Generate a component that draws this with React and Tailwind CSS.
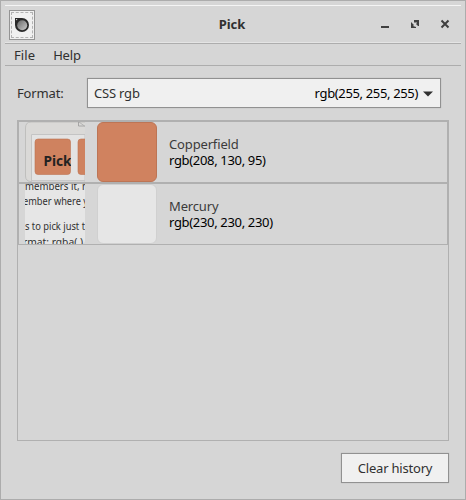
import React from "react";

function TitleBar() {
  return (
    <div className="grid h-[39px] shrink-0 grid-cols-[1fr_auto_1fr] items-center border-b border-[#adadad] border-t border-t-[#f4f4f4] shadow-[inset_0_-1px_0_#e4e4e4]">
      <div className="ml-1 flex h-[30px] w-[26px] items-center justify-center border border-[#949494] bg-[#f0f0f0]">
        <div className="flex h-[26px] w-[22px] items-center justify-center border border-dashed border-[#b2b2b2]">
          <svg width="14" height="14" viewBox="0 0 14 14" className="shrink-0">
            <defs>
              <linearGradient id="lens" x1="0" y1="0" x2="1" y2="1">
                <stop offset="0" stopColor="#666" />
                <stop offset="1" stopColor="#ccc" />
              </linearGradient>
            </defs>
            <path d="M0 0h7a7 7 0 1 1-7 7z" fill="#292929" />
            <circle cx="7.2" cy="7.2" r="5" fill="url(#lens)" />
            <circle cx="1.6" cy="1.6" r=".7" fill="#ddd" />
          </svg>
        </div>
      </div>
      <span className="mb-[2px] mr-[2px] text-[13px] font-bold leading-4 tracking-[-0.1px]">Pick</span>
      <div className="flex items-center justify-end gap-5 pb-px pr-[11px] text-[#404040]">
        <svg width="10" height="10" viewBox="0 0 10 10"><path d="M1 7h8v2H1z" fill="currentColor" /></svg>
        <svg width="10" height="10" viewBox="0 0 10 10">
          <path d="M4 1h5v6H8L6 5 7 4 6 3 5 4 4 3zM1 3l3 3-1 1 3 1v1H1z" fill="currentColor" />
        </svg>
        <svg width="10" height="10" viewBox="0 0 10 10"><path d="m1.500 1.500 7 7m0-7-7 7" stroke="currentColor" strokeWidth="2" /></svg>
      </div>
    </div>
  );
}

function CopperPreview() {
  return (
    <svg width="60" height="60" viewBox="0 0 60 60" className="shrink-0">
      <path d="M60 0H6Q.5 0 .5 6v48q0 5.500 6 5.500h54" fill="#dad9d7" stroke="#bfbfbd" />
      <path d="M6.500 60V12.500H60V60z" fill="#e3e3e3" stroke="#c4c4c4" />
      <path d="M53.500 0v4H60" fill="none" stroke="#999" strokeWidth=".8" />
      <path d="m54 0 5.500 4" fill="none" stroke="#aaa" strokeWidth=".8" />
      <rect x="10" y="17" width="35.500" height="35.500" rx="3" fill="#cf825f" stroke="#bd7453" strokeWidth=".6" />
      <rect x="53" y="17" width="20" height="35.500" rx="3" fill="#cf825f" stroke="#bd7453" strokeWidth=".6" />
      <svg width="46" height="60">
        <text x="18.500" y="44" fill="#222" fontSize="14" fontWeight="700" textLength="28" lengthAdjust="spacingAndGlyphs">Pick</text>
      </svg>
      <path d="M7 58.500h53" stroke="#c8c8c8" />
    </svg>
  );
}

function TextPreview() {
  return (
    <svg width="60" height="60" viewBox="0 0 60 60" className="shrink-0 overflow-hidden">
      <rect width="60" height="60" rx="4" fill="#e6e6e6" />
      <g fill="#303030" fontSize="10">
        <text x="0" y="6" textLength="63" lengthAdjust="spacingAndGlyphs">members it, n</text>
        <text x="-2" y="21" textLength="65" lengthAdjust="spacingAndGlyphs">ember where y</text>
        <text x="0" y="46" textLength="60" lengthAdjust="spacingAndGlyphs">s to pick just t</text>
        <text x="-2" y="61.500" textLength="60" lengthAdjust="spacingAndGlyphs">rmat: rgba( )</text>
      </g>
    </svg>
  );
}

function HistoryRow({ preview, swatch, name, value, last }) {
  return (
    <div className={`flex shrink-0 border-[#b0b0b0] pl-[6px] ${last ? "h-[61px] border-b" : "h-[62px] border-b-2"}`}>
      {preview}
      <div className={`ml-3 h-[60px] w-[60px] shrink-0 rounded-[6px] border ${swatch}`} />
      <div className="ml-3 pt-[14px] leading-4">
        <div className="tracking-[-0.15px] text-[#3b3b3b]">{name}</div>
        <div className="tracking-[-0.33px] text-black">{value}</div>
      </div>
    </div>
  );
}

export default function App() {
  return (
    <div className="flex h-[500px] w-[466px] flex-col overflow-hidden border border-[#acacac] bg-[#d6d6d6] px-1 pt-1 font-['Noto_Sans','Open_Sans',sans-serif] text-[13px] text-[#303030]">
      <TitleBar />
      <nav className="flex h-[22px] shrink-0 items-center gap-[18px] border-b border-[#adadad] pl-[9px] leading-4">
        <span className="tracking-[0.1px]">File</span>
        <span className="tracking-[-0.2px]">Help</span>
      </nav>
      <main className="flex flex-1 flex-col px-3 pt-3">
        <div className="flex h-[30px] shrink-0 items-center">
          <label className="w-[70px] pt-px tracking-[-0.15px]">Format:</label>
          <button className="flex h-[30px] w-[354px] items-center border border-[#919191] bg-[#f0f0f0] pl-[6px] pr-[7px] pt-px shadow-[0_0_1px_#aaa]">
            <span className="tracking-[-0.2px]">CSS rgb</span>
            <span className="ml-auto mr-[5px] tracking-[-0.35px] text-black">rgb(255, 255, 255)</span>
            <svg width="10" height="6" viewBox="0 0 10 6"><path d="M0 .5h10L5 5.500z" fill="#303030" /></svg>
          </button>
        </div>
        <section className="mt-3 flex h-[321px] w-[432px] shrink-0 flex-col border border-[#b0b0b0]">
          <div className="flex flex-col border-x border-t border-[#b0b0b0]">
            <HistoryRow preview={<CopperPreview />} swatch="border-[#bd7555] bg-[#d0825f]" name="Copperfield" value="rgb(208, 130, 95)" />
            <HistoryRow last preview={<TextPreview />} swatch="border-[#d0d0d0] bg-[#e6e6e6]" name="Mercury" value="rgb(230, 230, 230)" />
          </div>
        </section>
        <button className="mt-3 flex h-[30px] w-[108px] shrink-0 items-center justify-center self-end border border-[#919191] bg-[#f0f0f0] pt-px tracking-[-0.2px] shadow-[0_0_1px_#aaa]">
          Clear history
        </button>
      </main>
    </div>
  );
}
